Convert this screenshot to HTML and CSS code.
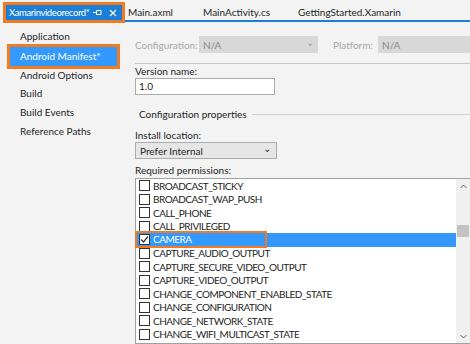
FILE: index.html
```html
<!DOCTYPE html>
<html>
<head>
<meta charset="utf-8">
<link rel="stylesheet" href="styles.css">
</head>
<body>
<div class="tabbar">
  <div class="tab-active-wrap">
    <div class="tab-active">
      <span class="tab-title">Xamarinvideorecord*</span>
      <svg class="tab-pin" width="9" height="7" viewBox="0 0 9 7"><path d="M0 3.5 H3 M3.5 1.5 V5.5 M3.5 1.5 H8 V5.5 H3.5" fill="none" stroke="#fff" stroke-width="1"/></svg>
      <svg class="tab-close" width="8" height="8" viewBox="0 0 8 8"><path d="M1 1 L7 7 M7 1 L1 7" stroke="#fff" stroke-width="1.2"/></svg>
    </div>
  </div>
  <div class="tabs">
    <span class="tab t1">Main.axml</span>
    <span class="tab t2">MainActivity.cs</span>
    <span class="tab t3">GettingStarted.Xamarin</span>
  </div>
</div>
<div class="main">
  <nav class="sidebar">
    <div class="nav-item">Application</div>
    <div class="nav-sel-wrap"><div class="nav-item sel">Android Manifest*</div></div>
    <div class="nav-item">Android Options</div>
    <div class="nav-item">Build</div>
    <div class="nav-item">Build Events</div>
    <div class="nav-item">Reference Paths</div>
  </nav>
  <section class="content">
    <div class="config-row">
      <span class="dis-label">Configuration:</span>
      <div class="dis-select conf"><span>N/A</span><span class="chev dis">&#8964;</span></div>
      <span class="dis-label plat">Platform:</span>
      <div class="dis-select platsel"><span>N/A</span></div>
    </div>
    <div class="rule"></div>
    <div class="label vname">Version name:</div>
    <div class="textbox">1.0</div>
    <div class="group-head"><span>Configuration properties</span><span class="group-line"></span></div>
    <div class="label">Install location:</div>
    <div class="select"><span>Prefer Internal</span><span class="chev">&#8964;</span></div>
    <div class="label perm">Required permissions:</div>
    <div class="listbox">
      <div class="rows">
        <div class="row"><span class="cb"></span>BROADCAST_STICKY</div>
        <div class="row"><span class="cb"></span>BROADCAST_WAP_PUSH</div>
        <div class="row"><span class="cb"></span>CALL_PHONE</div>
        <div class="row"><span class="cb"></span>CALL_PRIVILEGED</div>
        <div class="row selrow"><span class="hl-box"><span class="cb checked"><svg width="9" height="9" viewBox="0 0 9 9"><path d="M1 4.5 L3.5 7 L8 1.5" fill="none" stroke="#333" stroke-width="1.2"/></svg></span>CAMERA</span></div>
        <div class="row"><span class="cb"></span>CAPTURE_AUDIO_OUTPUT</div>
        <div class="row"><span class="cb"></span>CAPTURE_SECURE_VIDEO_OUTPUT</div>
        <div class="row"><span class="cb"></span>CAPTURE_VIDEO_OUTPUT</div>
        <div class="row"><span class="cb"></span>CHANGE_COMPONENT_ENABLED_STATE</div>
        <div class="row"><span class="cb"></span>CHANGE_CONFIGURATION</div>
        <div class="row"><span class="cb"></span>CHANGE_NETWORK_STATE</div>
        <div class="row"><span class="cb"></span>CHANGE_WIFI_MULTICAST_STATE</div>
      </div>
      <div class="scrollbar">
        <svg class="arr" width="7" height="5" viewBox="0 0 7 5"><path d="M0.5 4 L3.5 1 L6.5 4" fill="none" stroke="#606060" stroke-width="1"/></svg>
        <div class="thumb"></div>
        <div class="sb-fill"></div>
        <svg class="arr" width="7" height="5" viewBox="0 0 7 5"><path d="M0.5 1 L3.5 4 L6.5 1" fill="none" stroke="#606060" stroke-width="1"/></svg>
      </div>
    </div>
  </section>
</div>
</body>
</html>
```

FILE: styles.css
```css
* { box-sizing: border-box; }
html, body { margin: 0; padding: 0; }
body {
  width: 470px;
  height: 344px;
  overflow: hidden;
  background: #f3f3f3;
  font-family: "Lato", "Noto Sans", sans-serif;
  font-size: 10px;
  color: #1e1e1e;
}
.tabbar {
  display: flex;
  height: 23px;
}
.tab-active-wrap {
  margin: 2px 0 0 3px;
  border: 3px solid #f07b22;
  width: 122px;
  height: 21px;
}
.tab-active {
  background: #1b7fd8;
  color: #fff;
  height: 100%;
  display: flex;
  align-items: center;
  padding: 0 5px 0 3px;
}
.tab-title { flex: 1; white-space: nowrap; font-size: 9.5px; letter-spacing: -0.4px; }
.tab-pin { margin-right: 7px; }
.tabs {
  flex: 1;
  height: 22px;
  border-bottom: 2px solid #1b7fd8;
  display: flex;
  align-items: center;
  padding-left: 3px;
}
.tab { white-space: nowrap; margin-top: 4px; }
.t1 { width: 75px; }
.t2 { width: 95px; }
.main { display: flex; }
.sidebar {
  width: 125px;
  padding-top: 4px;
}
.nav-item {
  height: 18.8px;
  line-height: 18.8px;
  padding-left: 20px;
  white-space: nowrap;
}
.nav-sel-wrap {
  margin-left: 7px;
  width: 113px;
  border: 3px solid #f07b22;
  margin-top: -2px;
  margin-bottom: -3px;
}
.nav-item.sel {
  background: #3399ff;
  color: #fff;
  padding-left: 10px;
}
.content {
  flex: 1;
  padding-left: 10px;
  min-width: 0;
}
.config-row {
  display: flex;
  align-items: center;
  margin-top: 13px;
  height: 17px;
}
.dis-label { color: #a8a8a8; width: 64px; }
.dis-label.plat { width: 45px; margin-left: 15px; }
.dis-select {
  background: #d8d8d8;
  color: #8a8a8a;
  height: 17px;
  display: flex;
  align-items: center;
  justify-content: space-between;
  padding: 0 4px;
}
.conf { width: 119px; }
.platsel { flex: 1; }
.chev { font-size: 10px; line-height: 1; margin-top: -6px; color: #333; }
.chev.dis { color: #999; }
.rule {
  height: 1px;
  background: #c8c8c8;
  margin-top: 10px;
}
.label { white-space: nowrap; line-height: 12px; }
.vname { margin-top: 1px; }
.textbox {
  width: 140px;
  height: 17px;
  margin-top: 1px;
  background: #fff;
  border: 1px solid #aaaaaa;
  padding-left: 3px;
  line-height: 15px;
}
.group-head {
  display: flex;
  align-items: center;
  margin-top: 13px;
  padding-left: 4px;
  height: 12px;
}
.group-line {
  flex: 1;
  height: 1px;
  background: #d0d0d0;
  margin-left: 5px;
}
.group-head + .label { margin-top: 9px; }
.select {
  width: 142px;
  height: 17px;
  margin-top: 1px;
  background: #e6e6e6;
  border: 1px solid #acacac;
  display: flex;
  align-items: center;
  justify-content: space-between;
  padding: 0 5px 0 4px;
}
.perm { margin-top: 5px; }
.listbox {
  margin-top: 2px;
  height: 166px;
  background: #fff;
  border: 1px solid #a0a0a0;
  border-right: none;
  display: flex;
  padding-top: 0;
}
.rows { flex: 1; padding-left: 1px; }
.row {
  height: 13.5px;
  display: flex;
  align-items: center;
  white-space: nowrap;
  padding-left: 2px;
  letter-spacing: -0.5px;
}
.cb {
  width: 11px;
  height: 11px;
  border: 1px solid #333;
  background: #fff;
  margin-right: 3px;
  display: inline-flex;
  align-items: center;
  justify-content: center;
  flex: none;
}
.selrow {
  background: #3399ff;
  color: #fff;
  padding-left: 0;
}
.hl-box {
  display: flex;
  align-items: center;
  height: 17px;
  border: 2px solid #f07b22;
  width: 132px;
  margin-left: -2px;
  padding-left: 2px;
  margin-top: -1px;
}
.scrollbar {
  width: 14px;
  background: #f0f0f0;
  display: flex;
  flex-direction: column;
  align-items: center;
  padding: 5px 0 4px;
}
.thumb {
  width: 12px;
  height: 12px;
  background: #c2c2c2;
  margin-top: 36px;
}
.sb-fill { flex: 1; }
```
